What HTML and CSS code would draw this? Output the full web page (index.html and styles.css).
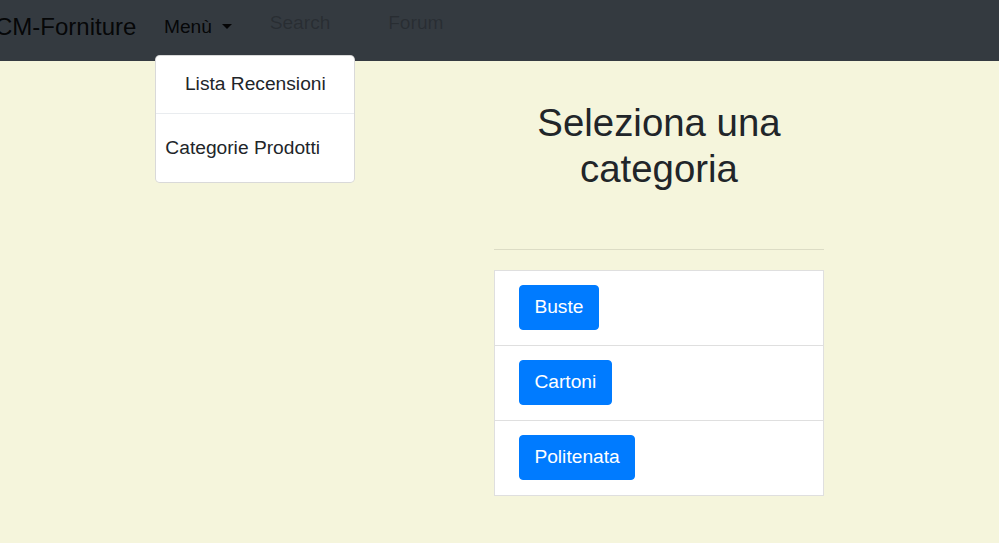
FILE: index.html
```html
<!DOCTYPE html>
<html lang="it">
<head>
<meta charset="utf-8">
<title>CM-Forniture</title>
<link rel="stylesheet" href="styles.css">
</head>
<body>
<nav class="navbar">
  <a class="brand" href="#">CM-Forniture</a>
  <div class="nav-item dropdown">
    <a class="nav-link menu-link" href="#">Menù<span class="caret"></span></a>
    <div class="dropdown-menu">
      <a class="dropdown-item first" href="#">Lista Recensioni</a>
      <a class="dropdown-item second" href="#">Categorie Prodotti</a>
    </div>
  </div>
  <a class="nav-link faint search" href="#">Search</a>
  <a class="nav-link faint forum" href="#">Forum</a>
</nav>
<main class="main">
  <div class="spacer"></div>
  <section class="column">
    <h1 class="title">Seleziona una categoria</h1>
    <hr class="rule">
    <ul class="list-group">
      <li class="list-item"><a class="btn" href="#">Buste</a></li>
      <li class="list-item"><a class="btn" href="#">Cartoni</a></li>
      <li class="list-item"><a class="btn" href="#">Politenata</a></li>
    </ul>
  </section>
</main>
</body>
</html>
```
FILE: styles.css
```css
* { box-sizing: border-box; }
html, body {
  margin: 0;
  padding: 0;
}
body {
  background: #f5f5dc;
  font-family: "Liberation Sans", Arial, sans-serif;
  color: #212529;
  font-size: 19.2px;
  line-height: 1.5;
  height: 543px;
  overflow: hidden;
}
a { text-decoration: none; }

.navbar {
  height: 61px;
  background: #343a40;
  display: flex;
  align-items: flex-start;
  position: relative;
  z-index: 2;
}
.brand {
  font-size: 24px;
  line-height: 36px;
  color: rgba(0,0,0,0.9);
  margin-left: -5px;
  padding-top: 9px;
  margin-right: 19px;
  white-space: nowrap;
}
.nav-item { position: relative; }
.nav-link {
  display: block;
  font-size: 19.2px;
  line-height: 28.8px;
  padding: 0 9.6px;
  white-space: nowrap;
}
.menu-link {
  color: rgba(0,0,0,0.9);
  padding: 13px 9.6px 0 8.6px;
}
.caret {
  display: inline-block;
  margin-left: 10px;
  vertical-align: 4px;
  border-top: 5.76px solid rgba(0,0,0,0.9);
  border-left: 5.76px solid transparent;
  border-right: 5.76px solid transparent;
}
.faint {
  color: rgba(0,0,0,0.22);
  padding-top: 8.5px;
}
.search { margin-left: 18.5px; }
.forum { margin-left: 38.5px; }

.dropdown-menu {
  position: absolute;
  left: 0;
  top: 55px;
  width: 200px;
  background: #fff;
  border: 1px solid rgba(0,0,0,0.15);
  border-radius: 4.8px;
  display: flex;
  flex-direction: column;
}
.dropdown-item {
  display: block;
  color: #212529;
  font-size: 19.2px;
  line-height: 28.8px;
  white-space: nowrap;
}
.dropdown-item.first {
  text-align: center;
  padding: 14px 9.6px 14.2px;
  border-bottom: 1px solid #e9ecef;
}
.dropdown-item.second {
  padding: 20px 9px 19px;
}

.main {
  display: grid;
  grid-template-columns: 494px 330px;
}
.column { padding-top: 38.5px; }
.title {
  margin: 0;
  font-size: 38.4px;
  line-height: 46px;
  font-weight: 500;
  text-align: center;
}
.rule {
  margin: 57.5px 0 20px;
  border: 0;
  border-top: 1px solid rgba(0,0,0,0.1);
}
.list-group {
  list-style: none;
  margin: 0;
  padding: 0;
  background: #fff;
  border: 1px solid rgba(0,0,0,0.125);
}
.list-item {
  padding: 14px 24px 15px;
  border-top: 1px solid rgba(0,0,0,0.125);
  display: flex;
}
.list-item:first-child { border-top: 0; }
.btn {
  display: inline-block;
  background: #007bff;
  border: 1px solid #007bff;
  color: #fff;
  font-size: 19.2px;
  line-height: 28.8px;
  padding: 7.1px 14.4px;
  border-radius: 4px;
}
```
